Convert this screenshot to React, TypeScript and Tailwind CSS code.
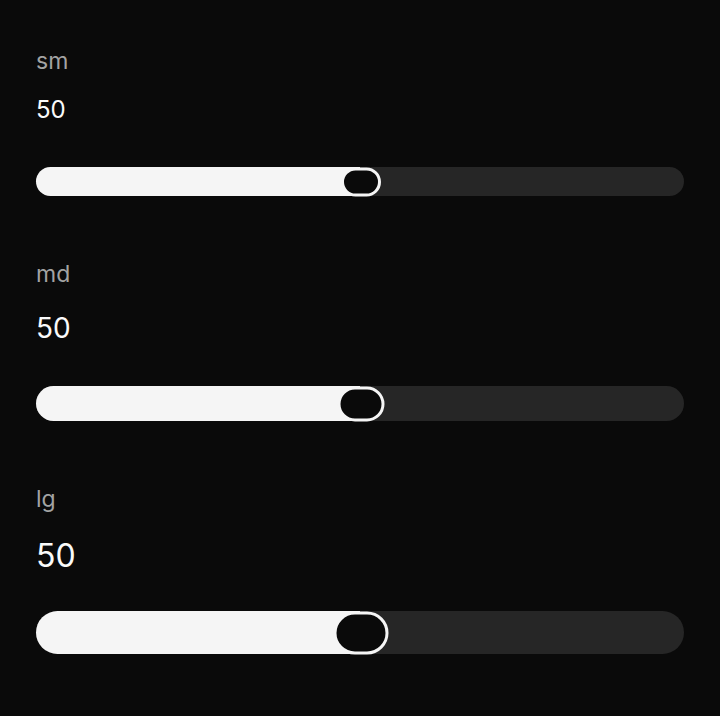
import React from "react";

type Size = "sm" | "md" | "lg";

const sizes: Record<Size, { value: string; track: string; thumb: string; gap: string; top: string }> = {
  sm: { value: "text-[24px] leading-[32px]", track: "h-[29px]", thumb: "h-[29px] w-[40px]", gap: "mt-[41px]", top: "mt-[19px]" },
  md: { value: "text-[28px] leading-[36px]", track: "h-[35px]", thumb: "h-[35px] w-[47px]", gap: "mt-[40px]", top: "mt-[22px]" },
  lg: { value: "text-[32px] leading-[40px]", track: "h-[43px]", thumb: "h-[43px] w-[55px]", gap: "mt-[35px]", top: "mt-[23px]" }
};

function SliderBlock({ size, value }: { size: Size; value: number }) {
  const s = sizes[size];
  return (
    <div className="flex flex-col">
      <span className="text-[23px] leading-[28px] text-[#a3a3a3]">{size}</span>
      <span className={`${s.top} ${s.value} text-[#fafafa]`}>{value}</span>
      <div className={`${s.gap} relative ${s.track} w-full rounded-full bg-[#262626]`}>
        <div className="h-full rounded-l-full bg-[#f5f5f5]" style={{ width: `${value}%` }} />
        <div
          className={`absolute top-1/2 -translate-x-1/2 -translate-y-1/2 ${s.thumb} rounded-full border-[3px] border-[#f5f5f5] bg-[#0a0a0a]`}
          style={{ left: `calc(${value}% + 1px)` }}
        />
      </div>
    </div>
  );
}

export default function App() {
  return (
    <div className="min-h-screen bg-[#0a0a0a] px-9 pt-[47px] font-['Inter',sans-serif]">
      <div className="flex flex-col gap-[64px]">
        <SliderBlock size="sm" value={50} />
        <SliderBlock size="md" value={50} />
        <SliderBlock size="lg" value={50} />
      </div>
    </div>
  );
}
